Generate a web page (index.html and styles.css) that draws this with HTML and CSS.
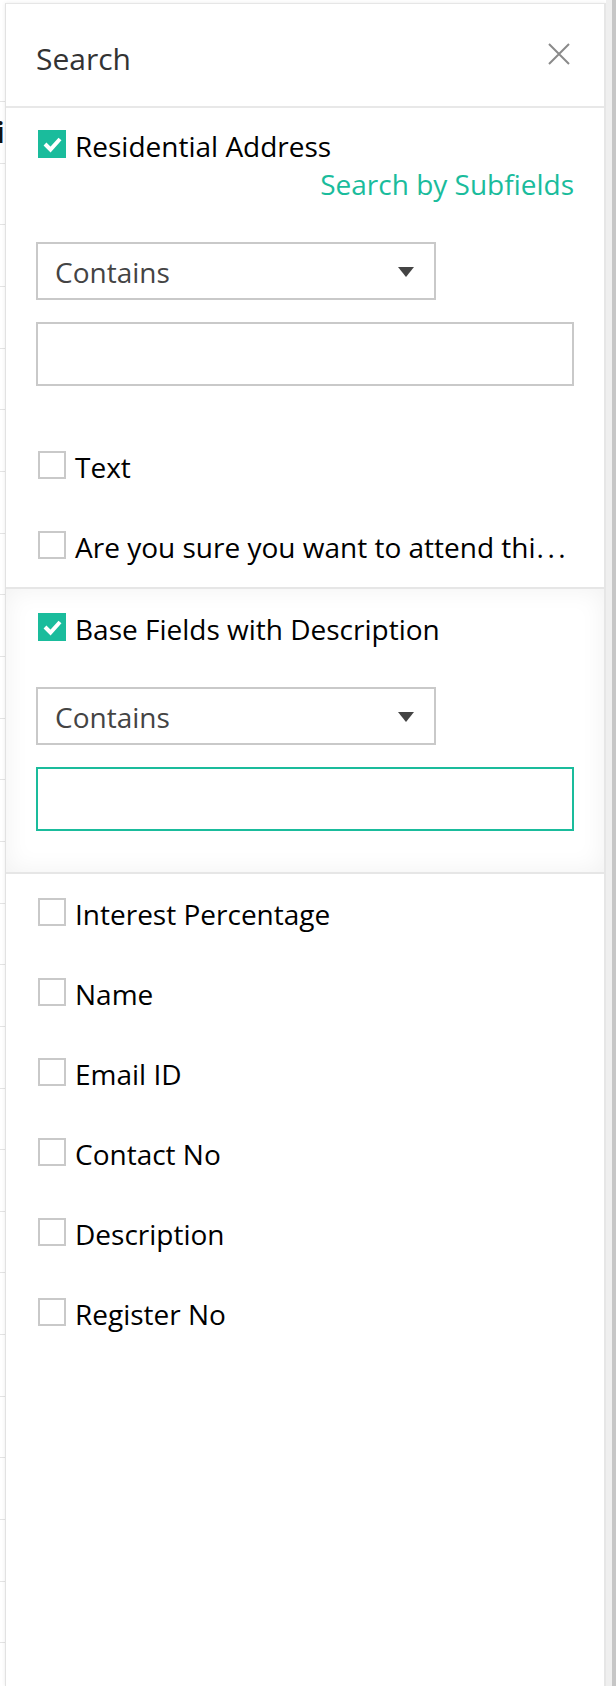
FILE: index.html
```html
<!DOCTYPE html>
<html lang="en">
<head>
<meta charset="utf-8">
<title>Search</title>
<link rel="stylesheet" href="styles.css">
</head>
<body>
<div class="page">
  <div class="bg-table">
    <div class="bg-head"></div>
    <div class="bg-row"><span class="bg-cell">i</span></div>
    <div class="bg-row"></div><div class="bg-row"></div><div class="bg-row"></div>
    <div class="bg-row"></div><div class="bg-row"></div><div class="bg-row"></div>
    <div class="bg-row"></div><div class="bg-row"></div><div class="bg-row"></div>
    <div class="bg-row"></div><div class="bg-row"></div><div class="bg-row"></div>
    <div class="bg-row"></div><div class="bg-row"></div><div class="bg-row"></div>
    <div class="bg-row"></div><div class="bg-row"></div><div class="bg-row"></div>
    <div class="bg-row"></div><div class="bg-row"></div><div class="bg-row"></div>
    <div class="bg-row"></div><div class="bg-row"></div><div class="bg-row"></div>
    <div class="bg-row"></div>
  </div>

  <aside class="panel">
    <header class="panel-head">
      <h2 class="panel-title">Search</h2>
      <span class="close" aria-label="Close">
        <svg width="22" height="22" viewBox="0 0 22 22"><path d="M1 1 L21 21 M21 1 L1 21" stroke="#8a8a8a" stroke-width="2" fill="none"/></svg>
      </span>
    </header>

    <section class="group">
      <div class="field field-first">
        <div class="check-row">
          <span class="cb checked"><svg width="28" height="28" viewBox="0 0 28 28"><path d="M7 14 L12.5 19.5 L22 9" stroke="#fff" stroke-width="4" fill="none"/></svg></span>
          <span class="label">Residential Address</span>
        </div>
        <div class="sub-link">Search by Subfields</div>
        <div class="select"><span class="select-text">Contains</span><span class="caret"></span></div>
        <div class="input"></div>
      </div>
      <div class="field">
        <div class="check-row"><span class="cb"></span><span class="label">Text</span></div>
      </div>
      <div class="field">
        <div class="check-row"><span class="cb"></span><span class="label">Are you sure you want to attend thi<span class="dots">...</span></span></div>
      </div>
    </section>

    <section class="group group-active">
      <div class="field">
        <div class="check-row">
          <span class="cb checked"><svg width="28" height="28" viewBox="0 0 28 28"><path d="M7 14 L12.5 19.5 L22 9" stroke="#fff" stroke-width="4" fill="none"/></svg></span>
          <span class="label">Base Fields with Description</span>
        </div>
        <div class="select"><span class="select-text">Contains</span><span class="caret"></span></div>
        <div class="input input-focus"></div>
      </div>
    </section>

    <section class="group group-plain">
      <div class="field"><div class="check-row"><span class="cb"></span><span class="label">Interest Percentage</span></div></div>
      <div class="field"><div class="check-row"><span class="cb"></span><span class="label">Name</span></div></div>
      <div class="field"><div class="check-row"><span class="cb"></span><span class="label">Email ID</span></div></div>
      <div class="field"><div class="check-row"><span class="cb"></span><span class="label">Contact No</span></div></div>
      <div class="field"><div class="check-row"><span class="cb"></span><span class="label">Description</span></div></div>
      <div class="field"><div class="check-row"><span class="cb"></span><span class="label">Register No</span></div></div>
    </section>
  </aside>

  <div class="scrollbar"><div class="thumb"></div></div>
</div>
</body>
</html>
```

FILE: styles.css
```css
* { box-sizing: border-box; }

html, body {
  margin: 0;
  padding: 0;
  background: #ffffff;
  font-family: "Open Sans", "Noto Sans", sans-serif;
}

.page {
  position: relative;
  width: 616px;
  height: 1686px;
  overflow: hidden;
  background: #ffffff;
}

/* background table peeking out on the left */
.bg-table {
  width: 100%;
}
.bg-head {
  height: 102px;
  border-bottom: 1px solid #e4e4e4;
}
.bg-row {
  height: 61.67px;
  border-bottom: 1px solid #e4e4e4;
  display: flex;
  align-items: center;
}
.bg-cell {
  font-weight: 700;
  font-size: 28px;
  color: #111;
  margin-left: -4px;
}

/* side panel */
.panel {
  position: absolute;
  top: 3px;
  left: 5px;
  right: 10px;
  bottom: 0;
  background: #ffffff;
  border-top: 1px solid #e6e6e6;
  border-left: 1px solid #e2e2e2;
  border-right: 2px solid #e6e6e6;
  box-shadow: 0 0 4px rgba(0, 0, 0, 0.08);
}

.panel-head {
  display: flex;
  justify-content: space-between;
  align-items: flex-start;
  padding: 34px 34px 27px 30px;
  border-bottom: 2px solid #e8e8e8;
}
.panel-title {
  margin: 0;
  font-size: 30px;
  line-height: 41px;
  font-weight: 400;
  color: #333333;
}
.close {
  display: block;
  width: 22px;
  height: 22px;
  margin-top: 5px;
}
.close svg { display: block; }

.group {
  padding: 0 30px;
  border-bottom: 2px solid #e6e6e6;
}
.group-active {
  background: #ffffff;
  box-shadow: inset 0 0 26px rgba(0, 0, 0, 0.06);
}
.group-plain {
  border-bottom: none;
}

.field {
  padding: 21px 0;
}
.field-first {
  padding-top: 19px;
}

.check-row {
  display: flex;
  align-items: flex-start;
}
.cb {
  flex: 0 0 28px;
  width: 28px;
  height: 28px;
  margin: 3px 9px 0 2px;
  border: 2px solid #c9c9c9;
  background: #ffffff;
}
.cb.checked {
  border: none;
  background: #1abc9c;
}
.cb svg { display: block; }

.label {
  min-width: 0;
  font-size: 28px;
  line-height: 38px;
  color: #000000;
  white-space: nowrap;
}
.dots {
  margin-left: 1px;
  letter-spacing: 3.5px;
}

.sub-link {
  text-align: right;
  font-size: 28px;
  line-height: 38px;
  color: #1abc9c;
}

.select {
  width: 400px;
  height: 58px;
  margin-top: 39px;
  border: 2px solid #c9c9c9;
  background: #ffffff;
  display: flex;
  align-items: center;
  justify-content: space-between;
  padding: 2px 20px 0 17px;
}
.select-text {
  font-size: 28px;
  line-height: 38px;
  color: #444444;
}
.caret {
  width: 0;
  height: 0;
  border-left: 8px solid transparent;
  border-right: 8px solid transparent;
  border-top: 10px solid #444444;
}

.input {
  height: 64px;
  margin-top: 22px;
  margin-bottom: 20px;
  border: 2px solid #c9c9c9;
  background: #ffffff;
}
.input-focus {
  border-color: #1abc9c;
}

/* page scrollbar on the right */
.scrollbar {
  position: absolute;
  top: 0;
  right: 0;
  bottom: 0;
  width: 10px;
  background: #efefef;
  display: flex;
  justify-content: flex-end;
}
.thumb {
  width: 4px;
  background: #c6c6c6;
}
```
